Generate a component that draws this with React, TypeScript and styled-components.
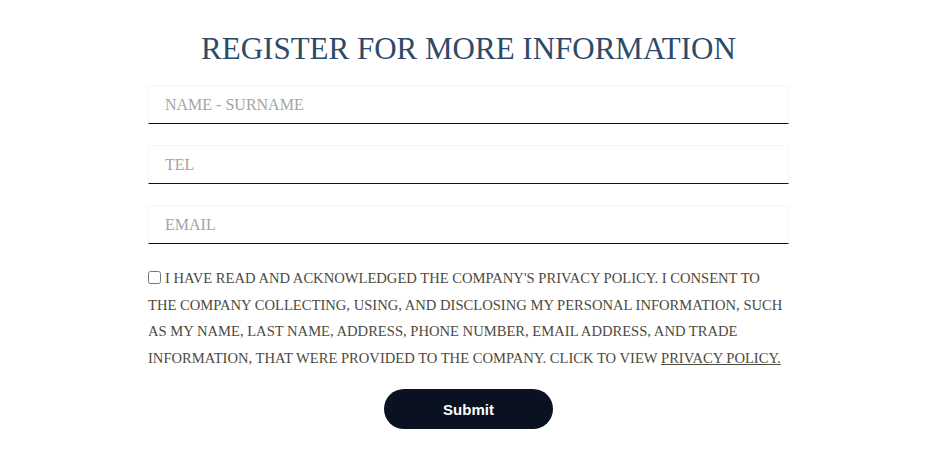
import React, { useState } from 'react';
import styled, { createGlobalStyle } from 'styled-components';

const GlobalStyle = createGlobalStyle`
  html, body {
    margin: 0;
    padding: 0;
    background: #fff;
  }
`;

const Page = styled.div`
  width: 641px;
  margin: 0 auto;
  padding: 28px 1px 0 0;
  display: flex;
  flex-direction: column;
  align-items: stretch;
  font-family: "Liberation Serif", serif;
`;

const Title = styled.h2`
  margin: 0 0 15px;
  text-align: center;
  font-weight: 400;
  font-size: 31px;
  line-height: 42px;
  letter-spacing: 0;
  color: #2e4a6a;
  text-transform: uppercase;
`;

const Fields = styled.div`
  display: flex;
  flex-direction: column;
  gap: 21px;
`;

const Input = styled.input`
  box-sizing: border-box;
  width: 100%;
  height: 39px;
  border: 1px solid #f6f6f6;
  border-bottom: 1.5px solid #111;
  background: #fff;
  padding: 0 16px;
  font-family: "Liberation Serif", serif;
  font-size: 16px;
  color: #333;
  outline: none;

  &::placeholder {
    color: #a4a4a4;
    text-transform: uppercase;
  }
`;

const Consent = styled.label`
  margin-top: 21px;
  display: flex;
  flex-direction: column;
  font-size: 14.6px;
  line-height: 26.5px;
  color: #4d4a3e;
  text-transform: uppercase;
`;

const Line = styled.span`
  display: block;
  white-space: nowrap;
`;

const Check = styled.input`
  margin: 0 4px 0 0;
  width: 13px;
  height: 13px;
  vertical-align: -1px;
`;

const PolicyLink = styled.a`
  color: #4d4a3e;
  text-decoration: underline;
`;

const SubmitRow = styled.div`
  display: flex;
  justify-content: center;
  margin-top: 18px;
`;

const SubmitButton = styled.button`
  width: 169px;
  height: 40px;
  border: none;
  border-radius: 20px;
  background: #0a1120;
  color: #fff;
  font-family: "Liberation Sans", Arial, sans-serif;
  font-weight: 700;
  font-size: 15px;
  cursor: pointer;
`;

const consentLines = [
  "the company collecting, using, and disclosing my personal information, such",
  "as my name, last name, address, phone number, email address, and trade",
];

export default function App() {
  const [agree, setAgree] = useState(false);

  return (
    <>
      <GlobalStyle />
      <Page>
        <Title>Register for more information</Title>
        <Fields>
          <Input placeholder="Name - Surname" />
          <Input placeholder="Tel" />
          <Input placeholder="Email" />
        </Fields>
        <Consent>
          <Line>
            <Check type="checkbox" checked={agree} onChange={() => setAgree(!agree)} />
            I have read and acknowledged the company's privacy policy. I consent to
          </Line>
          {consentLines.map((text) => (
            <Line key={text}>{text}</Line>
          ))}
          <Line>
            information, that were provided to the company. Click to view{' '}
            <PolicyLink href="#">privacy policy.</PolicyLink>
          </Line>
        </Consent>
        <SubmitRow>
          <SubmitButton type="button">Submit</SubmitButton>
        </SubmitRow>
      </Page>
    </>
  );
}
